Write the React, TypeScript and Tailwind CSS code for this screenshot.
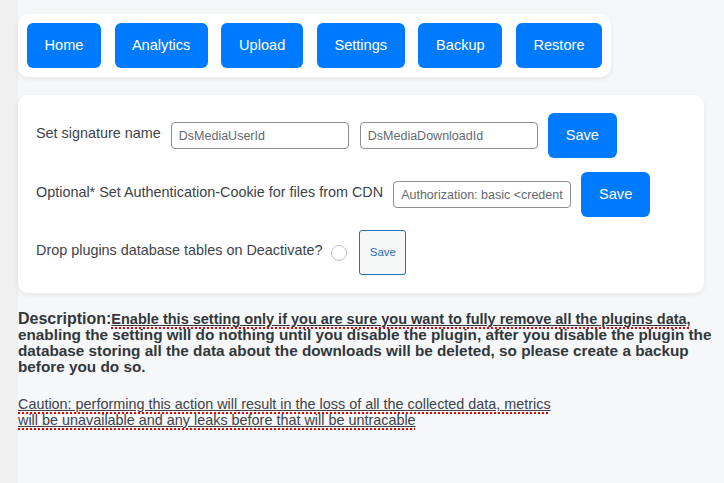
import React from "react";

const navItems: [string, string][] = [
  ["Home", "w-[74px]"],
  ["Analytics", "w-[93px]"],
  ["Upload", "w-[82px]"],
  ["Settings", "w-[88px]"],
  ["Backup", "w-[84px]"],
  ["Restore", "w-[86px]"],
];

function BlueBtn({ children }: { children: React.ReactNode }) {
  return (
    <button className="h-[45px] w-[69px] shrink-0 rounded-[6px] bg-[#007bff] text-[14.6px] text-white">
      {children}
    </button>
  );
}

function Field({ value }: { value: string }) {
  return (
    <input
      readOnly
      value={value}
      className="h-[27px] w-[178px] shrink-0 rounded-[4px] border border-[#8c8f94] bg-white px-[7px] text-[12.5px] text-[#646970] outline-none"
    />
  );
}

export default function App() {
  return (
    <div
      className="flex h-[483px] w-[724px] overflow-hidden bg-[#f6f7f8] text-[#3c434a]"
      style={{ fontFamily: '"Liberation Sans", Arial, sans-serif' }}
    >
      <div className="h-full w-[18px] shrink-0 bg-[#f0f0f0]" />
      <div className="flex min-w-0 flex-1 flex-col pt-[14px]">
        <div className="flex w-[593px] gap-[13.6px] rounded-[10px] bg-white p-[9px] shadow-[0_2px_5px_rgba(0,0,0,0.07)]">
          {navItems.map(([n, w]) => (
            <button
              key={n}
              className={`h-[45px] ${w} shrink-0 rounded-[6px] bg-[#007bff] text-[14.6px] text-white`}
            >
              {n}
            </button>
          ))}
        </div>

        <div className="mt-[18px] flex w-[686px] flex-col gap-[14px] rounded-[10px] bg-white px-[18px] py-[18px] shadow-[0_2px_5px_rgba(0,0,0,0.07)]">
          <div className="flex items-center">
            <span className="mb-[4px] text-[14.4px]">Set signature name</span>
            <div className="ml-[10px]"><Field value="DsMediaUserId" /></div>
            <div className="ml-[11px]"><Field value="DsMediaDownloadId" /></div>
            <div className="ml-[10px]"><BlueBtn>Save</BlueBtn></div>
          </div>
          <div className="flex items-center">
            <span className="mb-[4px] text-[14.4px]">Optional* Set Authentication-Cookie for files from CDN</span>
            <div className="ml-[10px]"><Field value="Authorization: basic <credentials>" /></div>
            <div className="ml-[10px]"><BlueBtn>Save</BlueBtn></div>
          </div>
          <div className="-mt-[1px] flex items-center">
            <span className="mb-[4px] text-[14.4px]">Drop plugins database tables on Deactivate?</span>
            <span className="ml-[9px] h-[16px] w-[16px] rounded-full border border-[#c3c4c7] bg-white" />
            <button className="ml-[12px] h-[45px] w-[47px] rounded-[3px] border border-[#2271b1] bg-[#f6f7f7] text-[11.5px] text-[#2271b1]">
              Save
            </button>
          </div>
        </div>

        <div className="mt-[18px] whitespace-nowrap font-bold leading-[16px] text-[#32373c]">
          <span className="text-[16px]">Description:</span>
          <span className="text-[14.5px] underline decoration-[#32373c] underline-offset-[1px]">
            <span className="underline decoration-dotted decoration-[#e00] decoration-[2px] underline-offset-[3px]">
              Enable this setting only if you are sure you want to fully remove all the plugins data,
            </span>
          </span>
          <br />
          <span className="text-[15.3px]">
            enabling the setting will do nothing until you disable the plugin, after you disable the plugin the
          </span>
          <br />
          <span className="text-[15.3px]">
            database storing all the data about the downloads will be deleted, so please create a backup
          </span>
          <br />
          <span className="text-[15.3px]">before you do so.</span>
        </div>

        <div className="mt-[21px] whitespace-nowrap text-[14.4px] leading-[16px] text-[#3c434a]">
          <span className="underline decoration-[#3c434a] underline-offset-[1px]">
            <span className="underline decoration-dotted decoration-[#e00] decoration-[2px] underline-offset-[3px]">
              Caution: performing this action will result in the loss of all the collected data, metrics
              <br />
              will be unavailable and any leaks before that will be untracable
            </span>
          </span>
        </div>
      </div>
    </div>
  );
}
